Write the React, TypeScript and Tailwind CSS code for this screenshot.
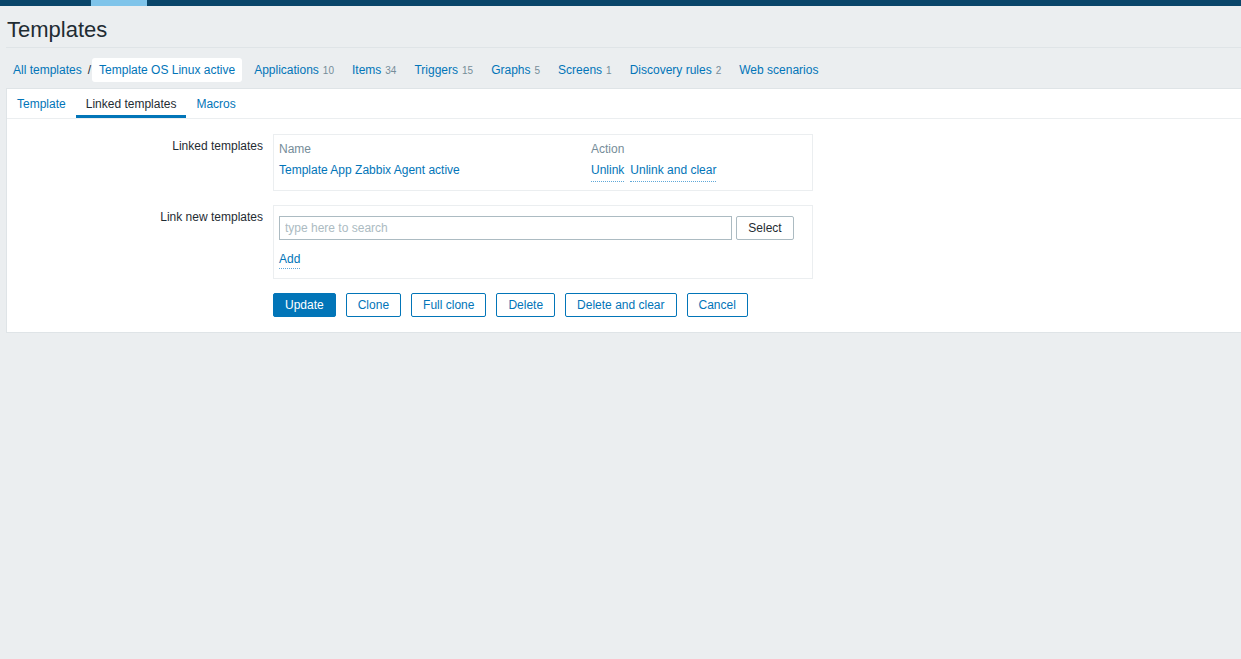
// Zabbix template edit page: linked templates tab
const navItems = [
  { label: "Applications", count: "10" },
  { label: "Items", count: "34" },
  { label: "Triggers", count: "15" },
  { label: "Graphs", count: "5" },
  { label: "Screens", count: "1" },
  { label: "Discovery rules", count: "2" },
  { label: "Web scenarios", count: "" },
];

const tabs = ["Template", "Linked templates", "Macros"];

const buttons = ["Clone", "Full clone", "Delete", "Delete and clear", "Cancel"];

const App = () => {
  return (
    <div
      className="min-h-[659px] w-full overflow-hidden bg-[#ebeef0] text-[12px] text-[#1f2c33]"
      style={{ fontFamily: '"Liberation Sans", Arial, sans-serif' }}
    >
      {/* top bar */}
      <div className="flex h-[6px] bg-[#0a466a]">
        <div className="w-[91px]" />
        <div className="w-[56px] bg-[#7fc4ea]" />
      </div>

      <div className="pl-[6px]">
        {/* header */}
        <div className="flex h-[42px] items-center border-b border-[#dfe4e7] pl-[1px] pt-[6px]">
          <h1 className="text-[22px] leading-none text-[#1f2c33]">Templates</h1>
        </div>

        {/* breadcrumbs */}
        <div className="flex h-[40px] items-center pt-[4px]">
          <a className="pl-[7px] pr-[6px] text-[#0275b8]">All templates</a>
          <span className="text-[#1f2c33]">/</span>
          <span className="ml-[1px] rounded-[3px] bg-white px-[7px] py-[3px] text-[#0275b8]">
            Template OS Linux active
          </span>
          <div className="ml-[6px] flex gap-[6px]">
            {navItems.map((item) => (
              <a key={item.label} className="px-[6px] text-[#0275b8]">
                {item.label}
                {item.count && (
                  <span className="ml-[4px] text-[10px] text-[#768d99]">{item.count}</span>
                )}
              </a>
            ))}
          </div>
        </div>

        {/* content */}
        <div className="border border-r-0 border-[#dfe4e7] bg-white pb-[15px]">
          <div className="flex h-[30px] border-b border-[#ebeef0]">
            {tabs.map((tab) => (
              <div
                key={tab}
                className={
                  tab === "Linked templates"
                    ? "flex items-center border-b-[3px] border-[#0275b8] px-[10px] pt-[3px] text-[#1f2c33]"
                    : "flex items-center px-[10px] text-[#0275b8]"
                }
              >
                {tab}
              </div>
            ))}
          </div>

          <div className="flex flex-col gap-[15px] pt-[15px]">
            {/* linked templates */}
            <div className="flex">
              <div className="w-[266px] pr-[10px] pt-[3px] text-right">Linked templates</div>
              <div className="w-[540px] border border-[#ebeef0] px-[5px] pb-[8px] pt-[5px]">
                <div className="grid grid-cols-[312px_1fr]">
                  <div className="text-[#768d99]">Name</div>
                  <div className="text-[#768d99]">Action</div>
                  <div className="pt-[3px] text-[#0275b8]">Template App Zabbix Agent active</div>
                  <div className="flex gap-[6px] pt-[3px] text-[#0275b8]">
                    <span className="border-b border-dotted border-[#5fa8d8] pb-[2px]">Unlink</span>
                    <span className="border-b border-dotted border-[#5fa8d8] pb-[2px]">
                      Unlink and clear
                    </span>
                  </div>
                </div>
              </div>
            </div>

            {/* link new templates */}
            <div className="-mt-[1px] flex">
              <div className="w-[266px] pr-[10px] pt-[3px] text-right">Link new templates</div>
              <div className="w-[540px] border border-[#ebeef0] px-[5px] pb-[10px] pt-[10px]">
                <div className="flex gap-[4px]">
                  <input
                    placeholder="type here to search"
                    className="h-[24px] w-[453px] border border-[#acbbc2] px-[5px] text-[12px] placeholder:text-[#acbbc2]"
                  />
                  <button className="h-[24px] w-[58px] rounded-[2px] border border-[#acbbc2] bg-white text-[#1f2c33]">
                    Select
                  </button>
                </div>
                <div className="mt-[10px]">
                  <span className="border-b border-dotted border-[#5fa8d8] pb-[2px] text-[#0275b8]">
                    Add
                  </span>
                </div>
              </div>
            </div>

            {/* buttons */}
            <div className="-mt-[1px] flex gap-[10px] pl-[266px]">
              <button className="h-[24px] rounded-[2px] border border-[#0275b8] bg-[#0275b8] px-[11px] text-white">
                Update
              </button>
              {buttons.map((b) => (
                <button
                  key={b}
                  className="h-[24px] rounded-[2px] border border-[#0275b8] bg-white px-[11px] text-[#0275b8]"
                >
                  {b}
                </button>
              ))}
            </div>
          </div>
        </div>
      </div>
    </div>
  );
};

export default App;
